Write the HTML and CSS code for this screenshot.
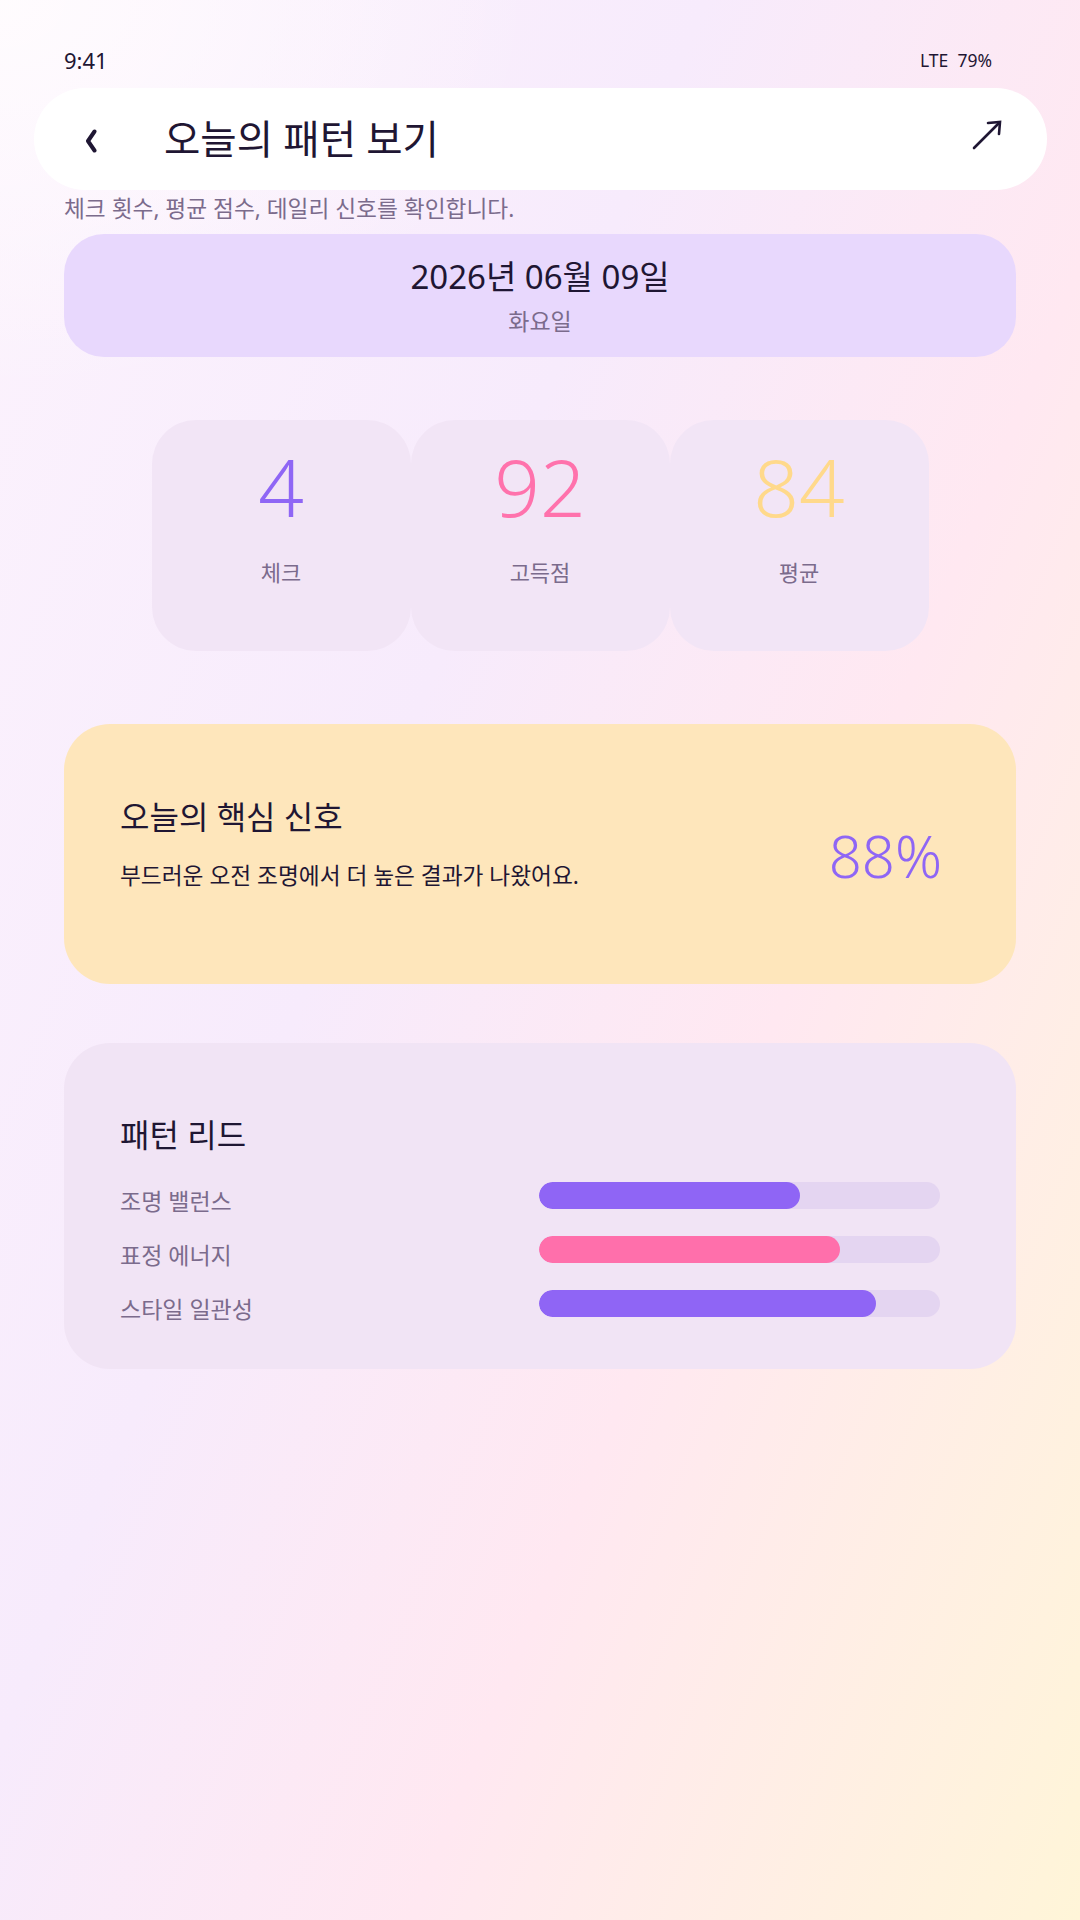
FILE: index.html
```html
<!DOCTYPE html>
<html lang="ko">
<head>
<meta charset="utf-8">
<meta name="viewport" content="width=1080">
<title>오늘의 패턴 보기</title>
<link rel="stylesheet" href="styles.css">
</head>
<body>
<div class="screen">
  <div class="status">
    <span class="time">9:41</span>
    <span class="sys">LTE&nbsp;&nbsp;79%</span>
  </div>

  <header class="topbar">
    <svg class="back" width="14" height="24" viewBox="0 0 14 24" aria-hidden="true">
      <polyline points="10.5,2.5 4,12 10.5,21.5" fill="none" stroke="#1f1633" stroke-width="4" stroke-linecap="round" stroke-linejoin="round"/>
    </svg>
    <h1 class="title">오늘의 패턴 보기</h1>
    <svg class="share" width="32" height="32" viewBox="0 0 32 32" aria-hidden="true">
      <line x1="3" y1="29" x2="28" y2="4" stroke="#1f1633" stroke-width="2.6" stroke-linecap="round"/>
      <polyline points="17,4 29,3 28,15" fill="none" stroke="#1f1633" stroke-width="2.6" stroke-linecap="round" stroke-linejoin="miter"/>
    </svg>
  </header>

  <p class="subtitle">체크 횟수, 평균 점수, 데일리 신호를 확인합니다.</p>

  <section class="date-card">
    <div class="date">2026년 06월 09일</div>
    <div class="weekday">화요일</div>
  </section>

  <section class="stats">
    <div class="stat">
      <div class="num purple">4</div>
      <div class="label">체크</div>
    </div>
    <div class="stat">
      <div class="num pink">92</div>
      <div class="label">고득점</div>
    </div>
    <div class="stat">
      <div class="num yellow">84</div>
      <div class="label">평균</div>
    </div>
  </section>

  <section class="signal-card">
    <div class="signal-text">
      <h2 class="card-title">오늘의 핵심 신호</h2>
      <p class="signal-desc">부드러운 오전 조명에서 더 높은 결과가 나왔어요.</p>
    </div>
    <div class="signal-pct">88%</div>
  </section>

  <section class="pattern-card">
    <h2 class="card-title">패턴 리드</h2>
    <div class="rows">
      <div class="row">
        <span class="row-label">조명 밸런스</span>
        <div class="track"><div class="fill purple-bg" style="width:65%"></div></div>
      </div>
      <div class="row">
        <span class="row-label">표정 에너지</span>
        <div class="track"><div class="fill pink-bg" style="width:75%"></div></div>
      </div>
      <div class="row">
        <span class="row-label">스타일 일관성</span>
        <div class="track"><div class="fill purple-bg" style="width:84%"></div></div>
      </div>
    </div>
  </section>
</div>
</body>
</html>
```

FILE: styles.css
```css
* { box-sizing: border-box; }

html, body {
  margin: 0;
  padding: 0;
}

body {
  width: 1080px;
  min-height: 1920px;
  font-family: "Noto Sans", "Noto Sans CJK KR", sans-serif;
  color: #1f1633;
  background:
    radial-gradient(ellipse 760px 560px at 0% 0%, rgba(255, 252, 254, 0.95), rgba(255, 252, 254, 0) 70%),
    linear-gradient(112deg, #fcf3fd 0%, #f7ebfc 38%, #ffe8f1 64%, #fff5d8 100%);
}

.screen {
  display: flex;
  flex-direction: column;
  min-height: 1920px;
}

/* status bar */
.status {
  display: flex;
  justify-content: space-between;
  align-items: center;
  padding: 44px 88px 0 64px;
  height: 76px;
  line-height: 32px;
}
.time { font-size: 22px; color: #1f1633; }
.sys { font-size: 17.5px; color: #1f1633; }

/* top bar */
.topbar {
  margin: 12px 33px 0 34px;
  height: 102px;
  border-radius: 51px;
  background: #ffffff;
  display: flex;
  align-items: center;
  padding: 0 44px 0 50px;
}
.back { flex: none; margin-top: 3px; }
.title {
  margin: 0 0 0 66px;
  flex: 1;
  font-size: 39.5px;
  font-weight: 400;
  line-height: 50px;
  color: #1f1633;
}
.share { flex: none; margin-top: -8px; }

.subtitle {
  margin: 2px 64px 0;
  font-size: 22.7px;
  line-height: 33px;
  color: #7b6b8c;
}

/* date card */
.date-card {
  margin: 9px 64px 0;
  height: 123px;
  border-radius: 40px;
  background: #e8d8fd;
  display: flex;
  flex-direction: column;
  align-items: center;
  padding-top: 21px;
}
.date {
  font-size: 33px;
  line-height: 44px;
  color: #1f1633;
}
.weekday {
  margin-top: 6px;
  font-size: 23px;
  line-height: 33px;
  color: #7b6b8c;
}

/* stats */
.stats {
  margin-top: 63px;
  display: flex;
  justify-content: center;
}
.stat {
  width: 259px;
  height: 231px;
  border-radius: 44px;
  background: #f2e5f6;
  display: flex;
  flex-direction: column;
  align-items: center;
  padding-top: 18px;
}
.num {
  font-size: 80px;
  line-height: 96px;
  font-weight: 350;
}
.label {
  margin-top: 22px;
  font-size: 22px;
  line-height: 33px;
  color: #7b6b8c;
}
.purple { color: #8f66f5; }
.pink { color: #ff72ac; }
.yellow { color: #ffd98b; }
.purple-bg { background: #8f65f5; }
.pink-bg { background: #ff6fab; }

/* signal card */
.signal-card {
  margin: 73px 64px 0;
  height: 260px;
  border-radius: 46px;
  background: #fee6bb;
  display: flex;
  align-items: flex-start;
  justify-content: space-between;
  padding: 71px 74px 0 56px;
}
.card-title {
  margin: 0;
  font-size: 32px;
  font-weight: 400;
  line-height: 44px;
  color: #1f1633;
}
.signal-desc {
  margin: 20px 0 0;
  font-size: 22.7px;
  line-height: 33px;
  color: #1f1633;
}
.signal-pct {
  margin-top: 26px;
  font-size: 58px;
  line-height: 70px;
  font-weight: 350;
  color: #8f66f5;
}

/* pattern card */
.pattern-card {
  margin: 59px 64px 0;
  height: 326px;
  border-radius: 46px;
  background: #f1e4f5;
  padding: 70px 76px 0 56px;
}
.rows {
  margin-top: 25px;
  display: flex;
  flex-direction: column;
  gap: 18px;
}
.row {
  display: flex;
  justify-content: space-between;
  align-items: flex-start;
  height: 36px;
}
.row-label {
  padding-top: 3px;
  font-size: 23px;
  line-height: 33px;
  color: #7b6b8c;
}
.track {
  width: 401px;
  height: 27px;
  border-radius: 14px;
  background: #e4d5f1;
  overflow: hidden;
}
.fill {
  height: 100%;
  border-radius: 14px;
}
```
